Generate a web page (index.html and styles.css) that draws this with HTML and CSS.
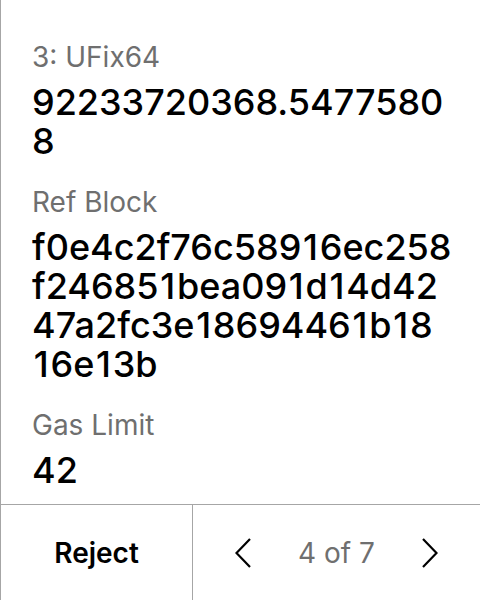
FILE: index.html
```html
<!DOCTYPE html>
<html>
<head>
<meta charset="utf-8">
<link rel="stylesheet" href="styles.css">
</head>
<body>
<div class="screen">
  <div class="content">
    <div class="field">
      <div class="label">3: UFix64</div>
      <div class="value">92233720368.5477580<br>8</div>
    </div>
    <div class="field">
      <div class="label">Ref Block</div>
      <div class="value">f0e4c2f76c589<span class="one">1</span>6ec258<br>f24685<span class="one">1</span>bea09<span class="one">1</span>d<span class="one">1</span>4d42<br>47a2fc3e<span class="one">1</span>869446<span class="one">1</span>b<span class="one">1</span>8<br><span class="one">1</span>6e<span class="one">1</span>3b</div>
    </div>
    <div class="field">
      <div class="label">Gas Limit</div>
      <div class="value">42</div>
    </div>
  </div>
  <div class="footer">
    <div class="reject">Reject</div>
    <div class="nav">
      <svg class="chev" width="16" height="30" viewBox="0 0 16 30"><path d="M15 1 L1.5 15 L15 29" fill="none" stroke="#000" stroke-width="2.2"/></svg>
      <span class="page">4 of 7</span>
      <svg class="chev" width="16" height="30" viewBox="0 0 16 30"><path d="M1 1 L14.5 15 L1 29" fill="none" stroke="#000" stroke-width="2.2"/></svg>
    </div>
  </div>
</div>
</body>
</html>
```
FILE: styles.css
```css
html, body { margin: 0; padding: 0; background: #fff; }
.screen {
  width: 480px; height: 600px; box-sizing: border-box;
  border-left: 1px solid #a6a6a6;
  display: flex; flex-direction: column;
  font-family: Inter, "Noto Sans", sans-serif;
  color: #000;
}
.content { flex: 1; padding: 41px 0 0 31px; display: flex; flex-direction: column; gap: 25px; }
.label { font-size: 28px; line-height: 32px; color: #6f6f6f; }
.value { font-size: 36px; line-height: 39px; font-weight: 500; margin-top: 10px; }
.one { display: inline-block; padding: 0 1.75px; }
.footer { height: 96px; border-top: 1px solid #a6a6a6; display: flex; box-sizing: border-box; }
.reject { width: 191px; display: flex; align-items: center; justify-content: center; font-size: 28px; font-weight: 600; border-right: 1px solid #a6a6a6; }
.nav { flex: 1; display: flex; align-items: center; justify-content: space-between; padding: 0 42px; }
.page { font-size: 28px; color: #6f6f6f; }
.chev { display: block; }
```
